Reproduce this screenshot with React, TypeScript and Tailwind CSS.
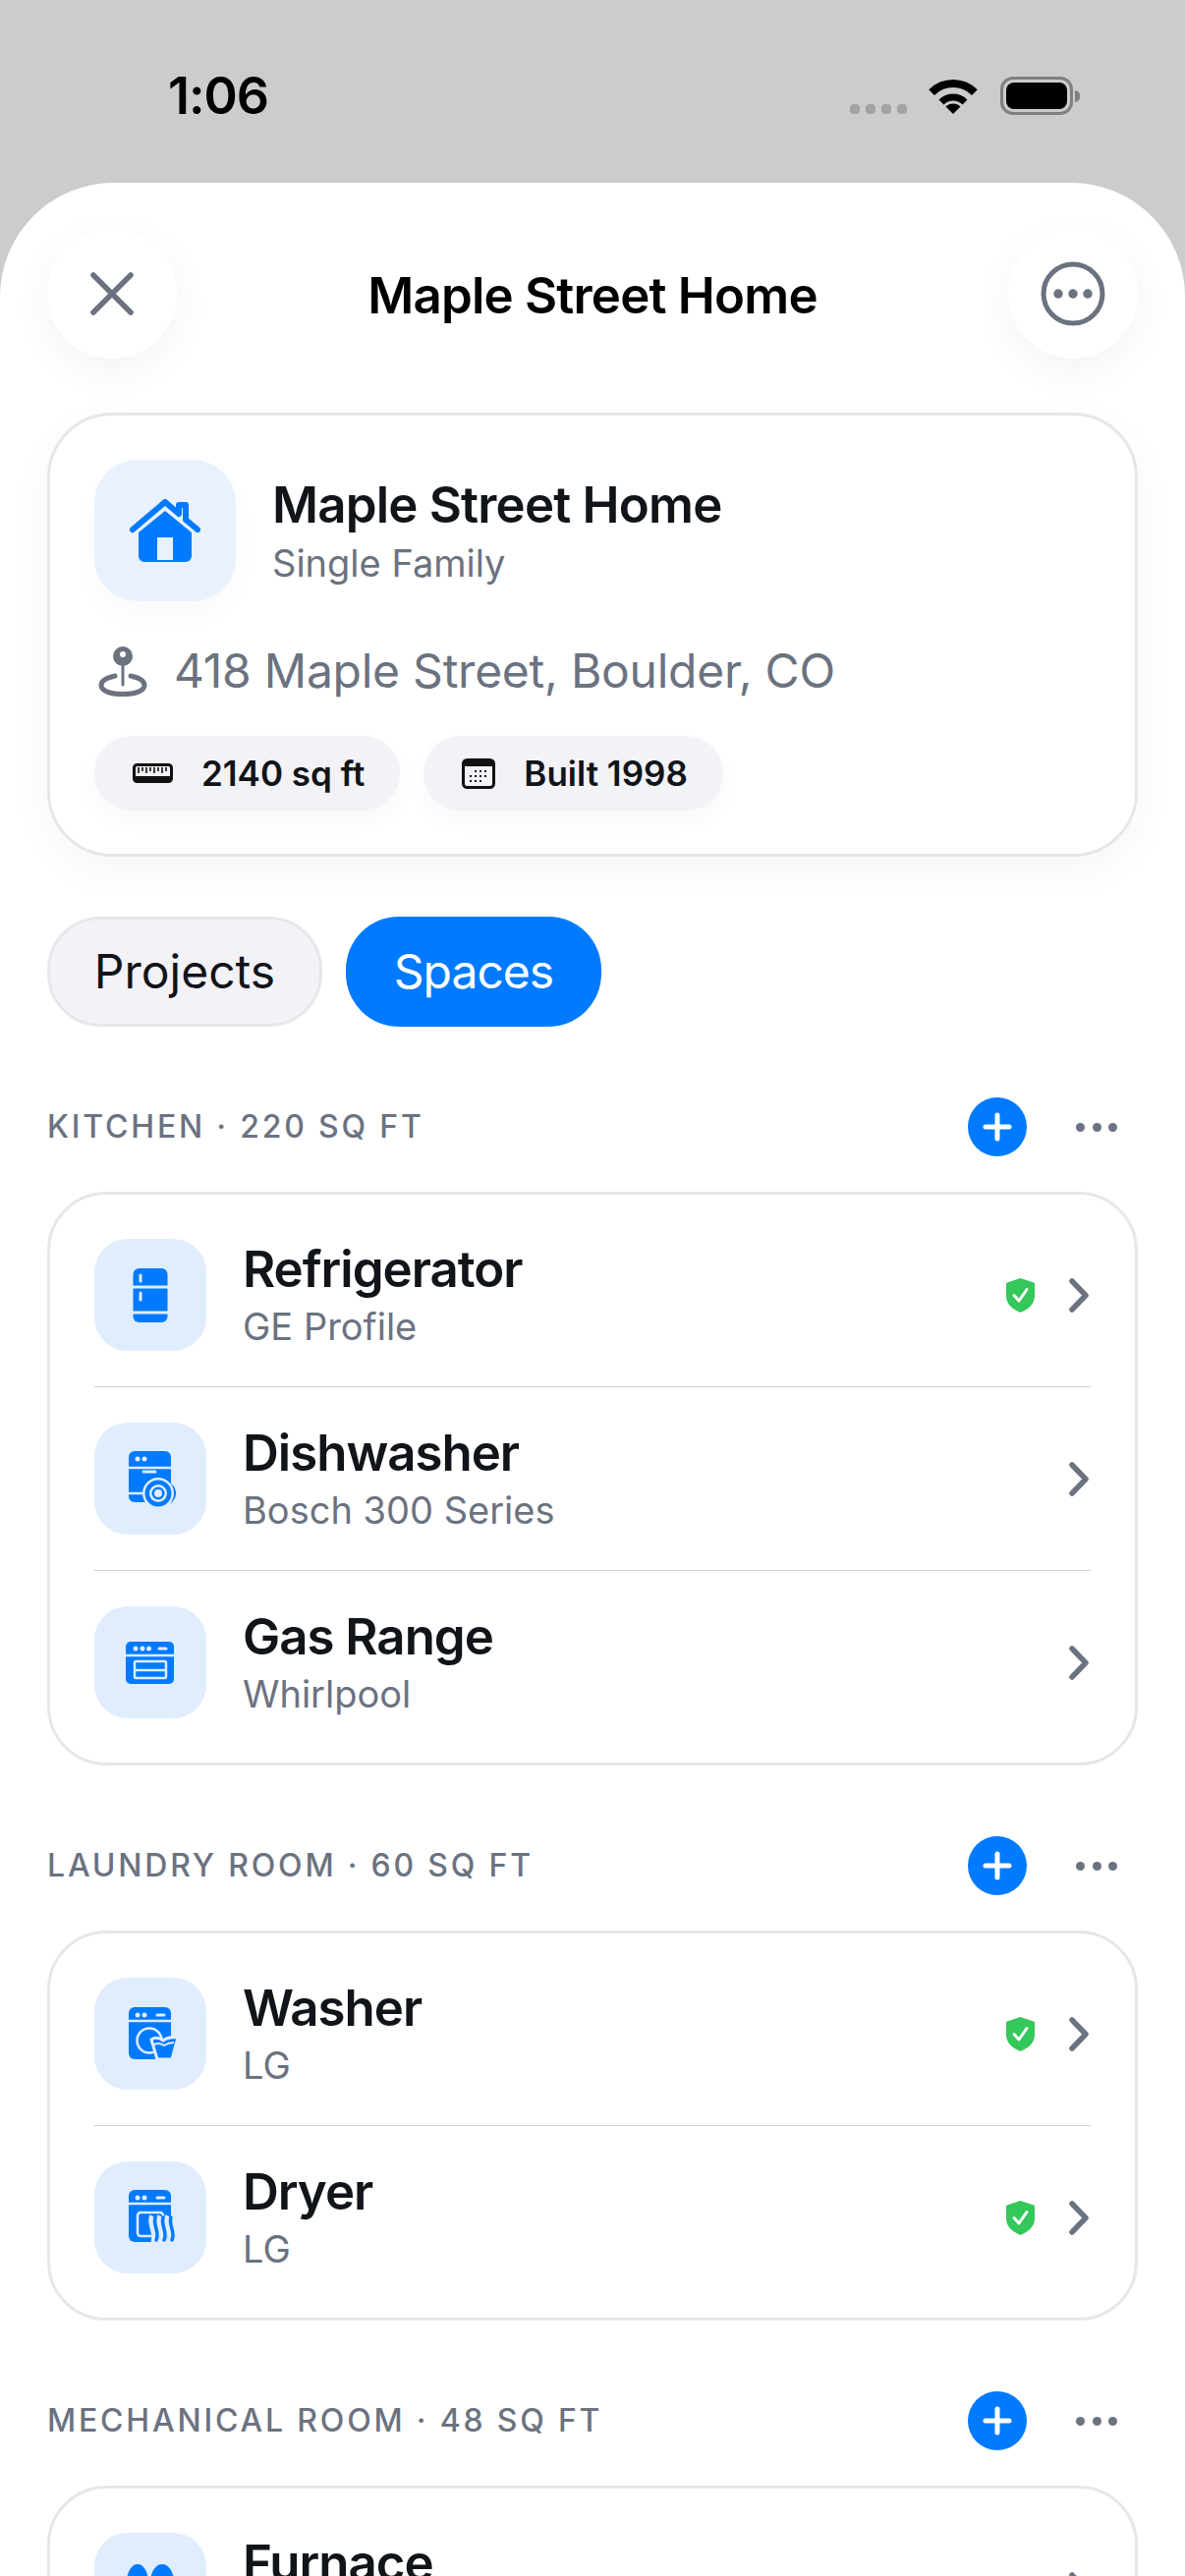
import type { ReactNode } from 'react';

const CUT = '#e0edfd';
const BLUE = '#007aff';

// status bar glyphs
function WifiIcon() {
  return (
    <svg width="50" height="38" viewBox="0 0 50 38" fill="none">
      <path d="M3.1 15.1A31 31 0 0 1 46.9 15.1" stroke="#000" strokeWidth="8" />
      <path d="M13 25A17 17 0 0 1 37 25" stroke="#000" strokeWidth="7" />
      <path d="M25 37L17.5 29.5A10.6 10.6 0 0 1 32.5 29.5Z" fill="#000" />
    </svg>
  );
}

function Battery() {
  return (
    <div className="flex items-center">
      <div className="h-[39px] w-[74px] rounded-[13px] border-[3px] border-[#808080] p-[3px]">
        <div className="h-full w-full rounded-[8px] bg-black" />
      </div>
      <div className="ml-[2px] h-[12px] w-[5px] rounded-r-full bg-[#808080]" />
    </div>
  );
}

function StatusBar() {
  return (
    <div className="flex h-[186px] shrink-0 items-start justify-between pl-[171px] pr-[107px] pt-[71px]">
      <span className="text-[52px] font-semibold leading-[54px] tracking-[-1px] text-black">1:06</span>
      <div className="flex items-end pt-[7px]">
        <div className="mb-[1px] flex gap-[6px]">
          {[0, 1, 2, 3].map((i) => (
            <div key={i} className="h-[10px] w-[10px] rounded-[4px] bg-[#a3a3a3]" />
          ))}
        </div>
        <div className="ml-[22px]">
          <WifiIcon />
        </div>
        <div className="ml-[23px]">
          <Battery />
        </div>
      </div>
    </div>
  );
}

function RoundButton({ children }: { children: ReactNode }) {
  return (
    <div className="flex h-[132px] w-[132px] items-center justify-center rounded-full bg-white shadow-[0_12px_40px_rgba(0,0,0,0.05)]">
      {children}
    </div>
  );
}

function Ruler() {
  return (
    <svg width="41" height="20" viewBox="0 0 41 20" fill="none">
      <rect x="1.5" y="1.5" width="38" height="17" rx="3" stroke="#111" strokeWidth="3" />
      <rect x="1" y="13" width="39" height="6" rx="2" fill="#111" />
      <path d="M6 4v6M10 4v4M14 4v6M18 4v4M22 4v6M26 4v4M30 4v6M34 4v4" stroke="#111" strokeWidth="1.6" />
    </svg>
  );
}

function CalendarIcon() {
  return (
    <svg width="34" height="31" viewBox="0 0 34 31" fill="none">
      <rect x="1.5" y="1.5" width="31" height="28" rx="4" stroke="#111" strokeWidth="3" />
      <rect x="1" y="1" width="32" height="7" rx="3" fill="#111" />
      <path
        d="M13 13h2M18 13h2M23 13h2M8 18h2M13 18h2M18 18h2M23 18h2M8 23h2M13 23h2M18 23h2"
        stroke="#111"
        strokeWidth="2"
      />
    </svg>
  );
}

function InfoPill({ icon, label }: { icon: ReactNode; label: string }) {
  return (
    <div className="flex h-[76px] items-center gap-[29px] rounded-[38px] bg-[#f2f2f7] pl-[39px] pr-[36px] shadow-[0_10px_24px_rgba(0,0,0,0.03)]">
      {icon}
      <span className="text-[35px] font-semibold leading-none text-[#111418]">{label}</span>
    </div>
  );
}

function HomeCard() {
  return (
    <div className="mx-[48px] mt-[55px] rounded-[66px] border-[3px] border-[#e7e7ea] bg-white px-[45px] pb-[44px] pt-[45px] shadow-[0_14px_44px_rgba(0,0,0,0.04)]">
      <div className="flex items-center">
        <div className="flex h-[144px] w-[144px] items-center justify-center rounded-[44px] bg-[#e9f1fe] shadow-[0_14px_30px_rgba(0,0,0,0.025)]">
          <svg width="74" height="64" viewBox="0 0 74 64" fill="none">
            <path d="M4 31L37 3L51 15V6H58V21L70 31" stroke={BLUE} strokeWidth="6" strokeLinecap="round" strokeLinejoin="round" />
            <path
              fillRule="evenodd"
              clipRule="evenodd"
              d="M10 34L37 12L64 34V58a6 6 0 0 1-6 6H16a6 6 0 0 1-6-6ZM29 39V62H45V39Z"
              fill={BLUE}
            />
          </svg>
        </div>
        <div className="ml-[37px] flex flex-col pt-[2px]">
          <span className="text-[51px] font-semibold leading-[60px] tracking-[-0.8px] text-[#111418]">Maple Street Home</span>
          <span className="mt-[4px] text-[38px] leading-[50px] text-[#6b7280]">Single Family</span>
        </div>
      </div>
      <div className="mt-[40px] flex h-[62px] items-center">
        <svg className="ml-[4px]" width="50" height="52" viewBox="0 0 50 52" fill="none">
          <circle cx="25" cy="11" r="10" fill="#6b7280" />
          <circle cx="25" cy="9" r="3" fill="#fff" />
          <path d="M25 20V40" stroke="#6b7280" strokeWidth="3" strokeLinecap="round" />
          <path d="M17 31C8 33 3 36 3 40.5C3 46 12 49.5 25 49.5C38 49.5 47 46 47 40.5C47 36 42 33 33 31" stroke="#6b7280" strokeWidth="5" strokeLinecap="round" />
        </svg>
        <span className="ml-[27px] text-[48px] leading-none tracking-[-0.25px] text-[#6b7280]">418 Maple Street, Boulder, CO</span>
      </div>
      <div className="mt-[35px] flex gap-[24px]">
        <InfoPill icon={<Ruler />} label="2140 sq ft" />
        <InfoPill icon={<CalendarIcon />} label="Built 1998" />
      </div>
    </div>
  );
}

function Tabs() {
  return (
    <div className="mx-[48px] mt-[61px] flex gap-[24px]">
      <div className="flex h-[112px] w-[280px] items-center justify-center rounded-[54px] border-[3px] border-[#e7e7ea] bg-[#f2f2f7] text-[48px] text-[#111418]">
        Projects
      </div>
      <div className="flex h-[112px] w-[260px] items-center justify-center rounded-[54px] bg-[#007aff] text-[48px] tracking-[-1px] text-white">
        Spaces
      </div>
    </div>
  );
}

function FridgeIcon() {
  return (
    <>
      <rect x="39.5" y="30" width="35" height="55" rx="6" fill={BLUE} />
      <path d="M39 49H75M39 75H75" stroke={CUT} strokeWidth="3" />
      <path d="M47 37V43M47 55V62" stroke={CUT} strokeWidth="3" strokeLinecap="round" />
    </>
  );
}

function DishwasherIcon() {
  return (
    <>
      <rect x="35" y="29" width="43" height="52" rx="6" fill={BLUE} />
      <path d="M35 46H78M35 72H60" stroke={CUT} strokeWidth="2.5" />
      <circle cx="44" cy="37" r="2.5" fill={CUT} />
      <circle cx="51" cy="37" r="2.5" fill={CUT} />
      <path d="M50 50H62" stroke={CUT} strokeWidth="3" strokeLinecap="round" />
      <circle cx="71" cy="72" r="12" fill={BLUE} />
      <circle cx="65" cy="72" r="16" fill={CUT} />
      <circle cx="65" cy="72" r="13.5" fill={BLUE} />
      <circle cx="65" cy="72" r="9" fill={CUT} />
      <circle cx="65" cy="72" r="6.5" fill={BLUE} />
      <circle cx="65" cy="72" r="4" fill={CUT} />
    </>
  );
}

function RangeIcon() {
  return (
    <>
      <rect x="32" y="36" width="49" height="43" rx="5" fill={BLUE} />
      <path d="M32 50H81" stroke={CUT} strokeWidth="2.5" />
      <circle cx="42" cy="43" r="2.5" fill={CUT} />
      <circle cx="49" cy="43" r="2.5" fill={CUT} />
      <circle cx="55.5" cy="43" r="2.5" fill={CUT} />
      <path d="M66 43H73" stroke={CUT} strokeWidth="3" strokeLinecap="round" />
      <rect x="41" y="56" width="32" height="17" rx="1.5" stroke={CUT} strokeWidth="2.5" fill="none" />
      <path d="M41 65H73" stroke={CUT} strokeWidth="2.5" />
    </>
  );
}

function WasherIcon() {
  return (
    <>
      <rect x="35" y="30" width="43" height="53" rx="6" fill={BLUE} />
      <path d="M35 44H78" stroke={CUT} strokeWidth="2.5" />
      <circle cx="44" cy="38" r="2.5" fill={CUT} />
      <circle cx="51" cy="38" r="2.5" fill={CUT} />
      <path d="M64 38H71" stroke={CUT} strokeWidth="3" strokeLinecap="round" />
      <circle cx="56" cy="64" r="12.5" fill="none" stroke={CUT} strokeWidth="2.5" />
      <path d="M58 63C62 60 66 61 70 64C74 61 79 60 85 61L79 83H64Z" fill={BLUE} stroke={CUT} strokeWidth="3" strokeLinejoin="round" />
      <path d="M61 68C65 66 68 67 71 69C74 67 77 66 81 66" stroke={CUT} strokeWidth="2" fill="none" />
    </>
  );
}

function DryerIcon() {
  return (
    <>
      <rect x="35" y="29" width="43" height="53" rx="6" fill={BLUE} />
      <path d="M35 43H78" stroke={CUT} strokeWidth="2.5" />
      <circle cx="44" cy="37" r="2.5" fill={CUT} />
      <circle cx="51" cy="37" r="2.5" fill={CUT} />
      <path d="M64 37H71" stroke={CUT} strokeWidth="3" strokeLinecap="round" />
      <rect x="44" y="52" width="26" height="24" rx="3" fill="none" stroke={CUT} strokeWidth="2.5" />
      <path d="M60 56C56 64 66 72 61 84" stroke={CUT} strokeWidth="8" fill="none" />
      <path d="M68 56C64 64 74 72 69 84" stroke={CUT} strokeWidth="8" fill="none" />
      <path d="M76 56C72 64 82 72 77 84" stroke={CUT} strokeWidth="8" fill="none" />
      <path d="M62 57C59 64 67 72 63 80M70 57C67 64 75 72 71 80M78 57C75 64 83 72 79 80" stroke={BLUE} strokeWidth="3.5" strokeLinecap="round" fill="none" />
    </>
  );
}

function FurnaceIcon() {
  return (
    <>
      <ellipse cx="44" cy="50" rx="11" ry="18" fill={BLUE} />
      <ellipse cx="69" cy="50" rx="12" ry="18" fill={BLUE} />
    </>
  );
}

function ShieldCheck() {
  return (
    <svg width="29" height="35" viewBox="0 0 29 35" fill="none">
      <path d="M14.5 0L28 4.5a1.5 1.5 0 0 1 1 1.4V18c0 8-6 13.5-14.5 17C6 31.5 0 26 0 18V5.9a1.5 1.5 0 0 1 1-1.4Z" fill="#34c759" />
      <path d="M8 17.5L13 23L21 11.5" stroke="#fff" strokeWidth="3" strokeLinecap="round" strokeLinejoin="round" />
    </svg>
  );
}

type Item = { name: string; model: string; icon: ReactNode; covered?: boolean };

function Row({ item, first }: { item: Item; first: boolean }) {
  return (
    <div className={first ? 'flex h-[186px] items-center' : 'flex h-[187px] items-center border-t border-[#cfcfd2]'}>
      <div className="h-[114px] w-[114px] shrink-0 rounded-[34px] bg-[#e0edfd]">
        <svg width="114" height="114" viewBox="0 0 114 114">
          {item.icon}
        </svg>
      </div>
      <div className="ml-[37px] flex flex-col">
        <span className="text-[51px] font-semibold leading-[60px] tracking-[-1px] text-[#111418]">{item.name}</span>
        <span className="mt-[3px] text-[38px] leading-[50px] text-[#6b7280]">{item.model}</span>
      </div>
      <div className="ml-auto flex items-center gap-[35px] pr-[2px]">
        {item.covered && <ShieldCheck />}
        <svg width="20" height="35" viewBox="0 0 20 35" fill="none">
          <path d="M3 3L17 17.5L3 32" stroke="#6b7280" strokeWidth="5.5" strokeLinecap="round" strokeLinejoin="round" />
        </svg>
      </div>
    </div>
  );
}

function Section({ title, items }: { title: string; items: Item[] }) {
  return (
    <div className="mx-[48px] mt-[72px]">
      <div className="flex h-[60px] items-center pr-[21px]">
        <span className="text-[32px] font-medium leading-none tracking-[2.8px] text-[#6b7280]">{title}</span>
        <div className="ml-auto flex h-[60px] w-[60px] items-center justify-center rounded-full bg-[#007aff]">
          <svg width="30" height="30" viewBox="0 0 30 30" fill="none">
            <path d="M15 3V27M3 15H27" stroke="#fff" strokeWidth="5" strokeLinecap="round" />
          </svg>
        </div>
        <div className="ml-[50px] flex gap-[7.5px]">
          {[0, 1, 2].map((i) => (
            <div key={i} className="h-[9px] w-[9px] rounded-full bg-[#6b7280]" />
          ))}
        </div>
      </div>
      <div className="mt-[36px] rounded-[60px] border-[3px] border-[#e7e7ea] bg-white px-[45px] py-[9px]">
        {items.map((item, i) => (
          <Row key={item.name} item={item} first={i === 0} />
        ))}
      </div>
    </div>
  );
}

export default function App() {
  return (
    <div className="flex h-[2622px] w-[1206px] flex-col overflow-hidden bg-[#cccccc] font-['Inter',sans-serif]">
      <StatusBar />
      <div className="flex-1 rounded-t-[116px] bg-white">
        <div className="flex items-center justify-between px-[48px] pt-[47px]">
          <RoundButton>
            <svg width="46" height="46" viewBox="0 0 46 46" fill="none">
              <path d="M4 4L42 42M42 4L4 42" stroke="#6b7280" strokeWidth="5.5" strokeLinecap="round" />
            </svg>
          </RoundButton>
          <span className="mt-[3px] text-[51px] font-semibold leading-none tracking-[-0.8px] text-black">Maple Street Home</span>
          <RoundButton>
            <svg width="66" height="66" viewBox="0 0 66 66" fill="none">
              <circle cx="33" cy="33" r="30" stroke="#6b7280" strokeWidth="5" />
              <circle cx="18" cy="33" r="4.7" fill="#6b7280" />
              <circle cx="33" cy="33" r="4.7" fill="#6b7280" />
              <circle cx="48" cy="33" r="4.7" fill="#6b7280" />
            </svg>
          </RoundButton>
        </div>
        <HomeCard />
        <Tabs />
        <Section
          title="KITCHEN · 220 SQ FT"
          items={[
            { name: 'Refrigerator', model: 'GE Profile', icon: <FridgeIcon />, covered: true },
            { name: 'Dishwasher', model: 'Bosch 300 Series', icon: <DishwasherIcon /> },
            { name: 'Gas Range', model: 'Whirlpool', icon: <RangeIcon /> },
          ]}
        />
        <Section
          title="LAUNDRY ROOM · 60 SQ FT"
          items={[
            { name: 'Washer', model: 'LG', icon: <WasherIcon />, covered: true },
            { name: 'Dryer', model: 'LG', icon: <DryerIcon />, covered: true },
          ]}
        />
        <Section title="MECHANICAL ROOM · 48 SQ FT" items={[{ name: 'Furnace', model: '\u00a0', icon: <FurnaceIcon /> }]} />
      </div>
    </div>
  );
}
